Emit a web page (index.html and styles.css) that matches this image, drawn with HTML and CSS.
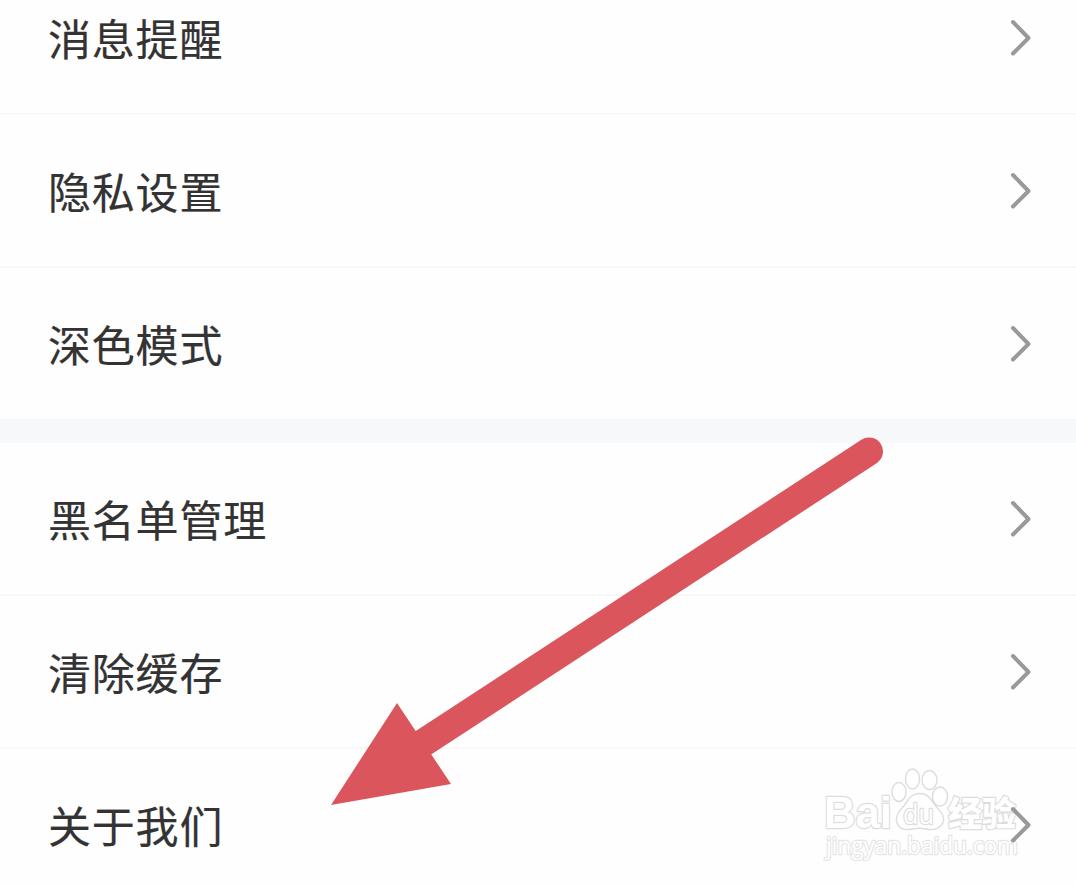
FILE: index.html
```html
<!DOCTYPE html>
<html lang="zh-CN">
<head>
    <meta charset="UTF-8">
    <meta name="viewport" content="width=device-width, initial-scale=1.0">
    <title>设置</title>
    <link rel="stylesheet" href="styles.css">
</head>
<body>
    <div class="settings">
        <div class="group">
            <div class="row">
                <span class="label">消息提醒</span>
                <svg class="chevron" viewBox="0 0 24 40"><path d="M4 4 L19.5 20 L4 35.5"/></svg>
            </div>
            <div class="row">
                <span class="label">隐私设置</span>
                <svg class="chevron" viewBox="0 0 24 40"><path d="M4 4 L19.5 20 L4 35.5"/></svg>
            </div>
            <div class="row">
                <span class="label">深色模式</span>
                <svg class="chevron" viewBox="0 0 24 40"><path d="M4 4 L19.5 20 L4 35.5"/></svg>
            </div>
        </div>
        <div class="group">
            <div class="row">
                <span class="label">黑名单管理</span>
                <svg class="chevron" viewBox="0 0 24 40"><path d="M4 4 L19.5 20 L4 35.5"/></svg>
            </div>
            <div class="row">
                <span class="label">清除缓存</span>
                <svg class="chevron" viewBox="0 0 24 40"><path d="M4 4 L19.5 20 L4 35.5"/></svg>
            </div>
            <div class="row">
                <span class="label">关于我们</span>
                <svg class="chevron" viewBox="0 0 24 40"><path d="M4 4 L19.5 20 L4 35.5"/></svg>
            </div>
        </div>

        <!-- 红色箭头 -->
        <svg class="arrow" viewBox="0 0 1076 884">
            <path class="shaft" d="M869 451.5 L420 745"/>
            <path class="head" d="M331 805 L397 703 L451 784 Z"/>
        </svg>

        <!-- 水印 -->
        <svg class="watermark" viewBox="0 0 240 120">
            <text class="brand" x="14" y="73" textLength="68" lengthAdjust="spacingAndGlyphs">Bai</text>
            <ellipse cx="89" cy="37" rx="7" ry="9.5"/>
            <ellipse cx="102.5" cy="24" rx="7" ry="10"/>
            <ellipse cx="119.5" cy="25" rx="7.5" ry="9.5"/>
            <ellipse cx="130" cy="41.5" rx="7.5" ry="9.5"/>
            <path d="M109 38.5 C100 38.5 98 46 93 52 C88 57 85.5 61 86.5 66 C88 74 95 75.5 102 74 Q109 72.5 116 74 C124 76 131.5 73 133.5 66 C134.5 59 129 56 125 50 C121 44 118 38.5 109 38.5 Z"/>
            <text class="du" x="93" y="69" textLength="31" lengthAdjust="spacingAndGlyphs">du</text>
            <text class="cn" x="138" y="71" textLength="68" lengthAdjust="spacingAndGlyphs">经验</text>
            <text class="url" x="16" y="99" textLength="192" lengthAdjust="spacingAndGlyphs">jingyan.baidu.com</text>
        </svg>
    </div>
</body>
</html>
```

FILE: styles.css
```css
body {
    margin: 0;
    background: #fefefe;
    color: #333;
    font-family: "Noto Sans CJK SC", sans-serif;
    overflow: hidden;
}

.settings {
    position: relative;
    height: 884px;
    overflow: hidden;
}

/* 第一行只露出下半部分 */
.group:first-child {
    margin-top: -38px;
    border-bottom: 24px solid #f6f8fa;
}

.row {
    display: flex;
    align-items: center;
    justify-content: space-between;
    box-sizing: border-box;
    height: 153px;
    padding: 1px 43px 0 48px;
    border-bottom: 2px solid #f8f8f8;
}

.row:last-child {
    height: 151px;
    border-bottom: none;
}

.label {
    padding-bottom: 3px;
    font-size: 43px;
    line-height: 60px;
    letter-spacing: 0.8px;
    -webkit-text-stroke: 0.2px #333;
}

/* 箭头图标压在水印上面 */
.chevron {
    position: relative;
    z-index: 1;
    width: 24px;
    height: 40px;
    fill: none;
    stroke: #999;
    stroke-width: 4;
    stroke-linecap: round;
    stroke-linejoin: round;
}

.arrow {
    position: absolute;
    top: 0;
    left: 0;
    width: 1076px;
    height: 884px;
}

.shaft {
    stroke: #db565c;
    stroke-width: 28;
    stroke-linecap: round;
}

.head {
    fill: #db565c;
}

.watermark {
    position: absolute;
    left: 810px;
    top: 755px;
    width: 240px;
    height: 120px;
    fill: #fff;
    stroke: #ddd;
    stroke-width: 1.4;
    stroke-linejoin: round;
}

.watermark text {
    stroke-width: 2.4;
    paint-order: stroke;
}

.brand {
    font: bold 44px "Liberation Sans", sans-serif;
}

.du {
    font: 27px "Open Sans", sans-serif;
}

.cn {
    font: 900 34px "Noto Sans CJK SC", sans-serif;
}

.url {
    font: 23px "Open Sans", sans-serif;
    stroke: #e6e6e6;
}
```
